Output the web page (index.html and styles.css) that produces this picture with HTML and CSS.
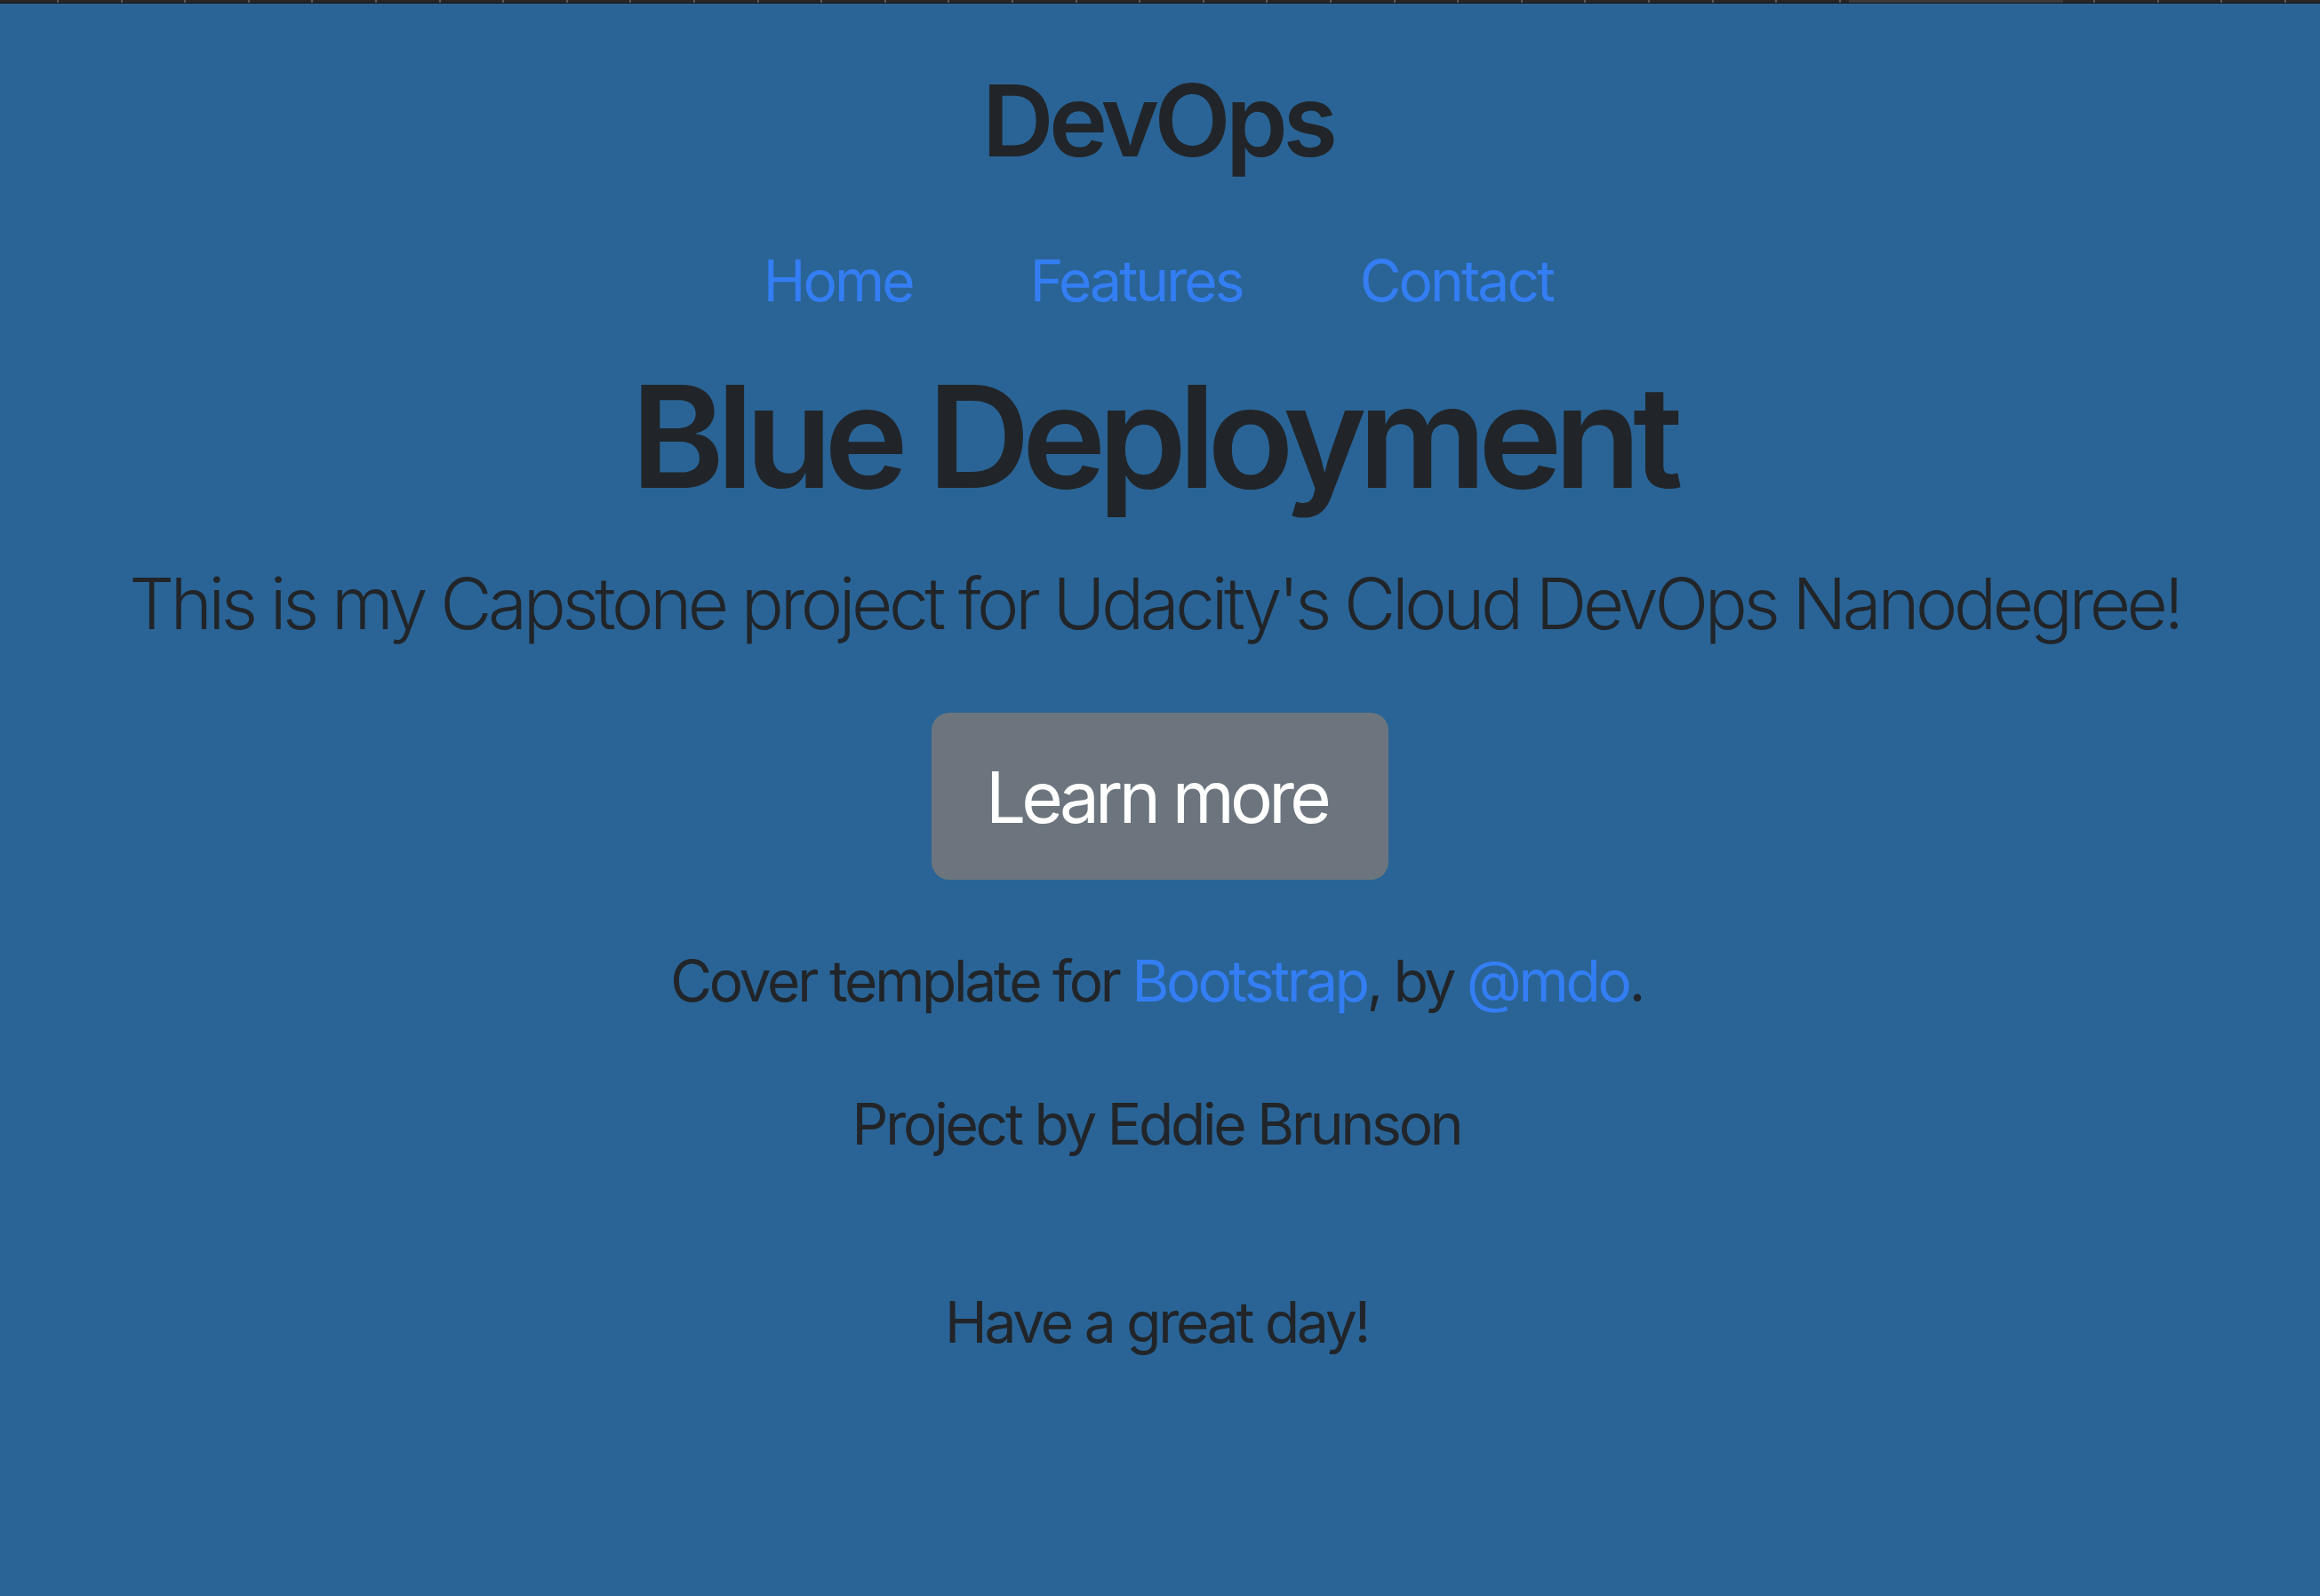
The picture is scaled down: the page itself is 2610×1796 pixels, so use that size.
FILE: index.html
```html
<!DOCTYPE html>
<html lang="en">
<head>
<meta charset="utf-8">
<title>DevOps - Blue Deployment</title>
<link rel="stylesheet" href="styles.css">
</head>
<body>
<div class="ruler"><span class="ruler-thumb"></span></div>
<div class="cover">
  <header class="masthead">
    <h3 class="brand">DevOps</h3>
    <nav class="nav">
      <a class="nav-link" href="#">Home</a>
      <a class="nav-link" href="#">Features</a>
      <a class="nav-link" href="#">Contact</a>
    </nav>
  </header>
  <main class="inner">
    <h1 class="heading">Blue Deployment</h1>
    <p class="lead">This is my Capstone project for Udacity's Cloud DevOps Nanodegree!</p>
    <div class="actions"><a class="btn" href="#">Learn more</a></div>
  </main>
  <footer class="footer">
    <p class="credit">Cover template for <a href="#">Bootstrap</a>, by <a href="#">@mdo</a>.</p>
    <p class="author">Project by Eddie Brunson</p>
    <p class="bye">Have a great day!</p>
  </footer>
</div>
</body>
</html>
```
FILE: styles.css
```css
html, body {
  margin: 0;
  padding: 0;
}
body {
  background: #2a6496;
  color: #212529;
  font-family: Inter, "Noto Sans", "Liberation Sans", sans-serif;
  min-height: 1796px;
  overflow: hidden;
}
.ruler {
  position: relative;
  height: 3px;
  border-bottom: 1px solid #151515;
  background-color: #262626;
  background-image: repeating-linear-gradient(to right, transparent 0, transparent 64px, #5a5a5a 64px, #5a5a5a 66px, transparent 66px, transparent 71.6px);
}
.ruler-thumb {
  position: absolute;
  left: 2080px;
  width: 241px;
  top: 0;
  height: 3px;
  background: #3a3a3a;
}
.cover {
  text-align: center;
}
.brand {
  margin: 64px 0 0;
  font-size: 112px;
  line-height: 1.2;
  font-weight: 600;
  letter-spacing: -0.05em;
  padding-right: 6px;
}
.nav {
  display: flex;
  justify-content: center;
  gap: 132px;
  margin-top: 76px;
  font-size: 64px;
  line-height: 1.2;
  letter-spacing: -0.045em;
  padding-right: 4px;
}
.nav-link, .credit a {
  color: #347ef4;
  text-decoration: none;
}
.heading {
  margin: 40px 0 0;
  font-size: 160px;
  line-height: 1.2;
  font-weight: 600;
  letter-spacing: -0.058em;
  padding-right: 16px;
}
.lead {
  margin: 44px 0 0;
  font-size: 80px;
  line-height: 1.2;
  font-weight: 300;
  letter-spacing: -0.055em;
  padding-right: 12px;
}
.actions {
  margin-top: 75px;
}
.btn {
  display: inline-block;
  box-sizing: border-box;
  width: 514px;
  height: 188px;
  padding: 47px 8px 45px 0;
  font-size: 80px;
  line-height: 1.2;
  color: #ffffff;
  background: #6c757d;
  border-radius: 20px;
  text-decoration: none;
  letter-spacing: -0.06em;
}
.credit, .author, .bye {
  font-size: 64px;
  line-height: 1.2;
  margin: 0;
  letter-spacing: -0.05em;
  padding-right: 8px;
}
.credit {
  margin-top: 76px;
}
.author {
  margin-top: 84px;
}
.bye {
  margin-top: 146px;
}
```
